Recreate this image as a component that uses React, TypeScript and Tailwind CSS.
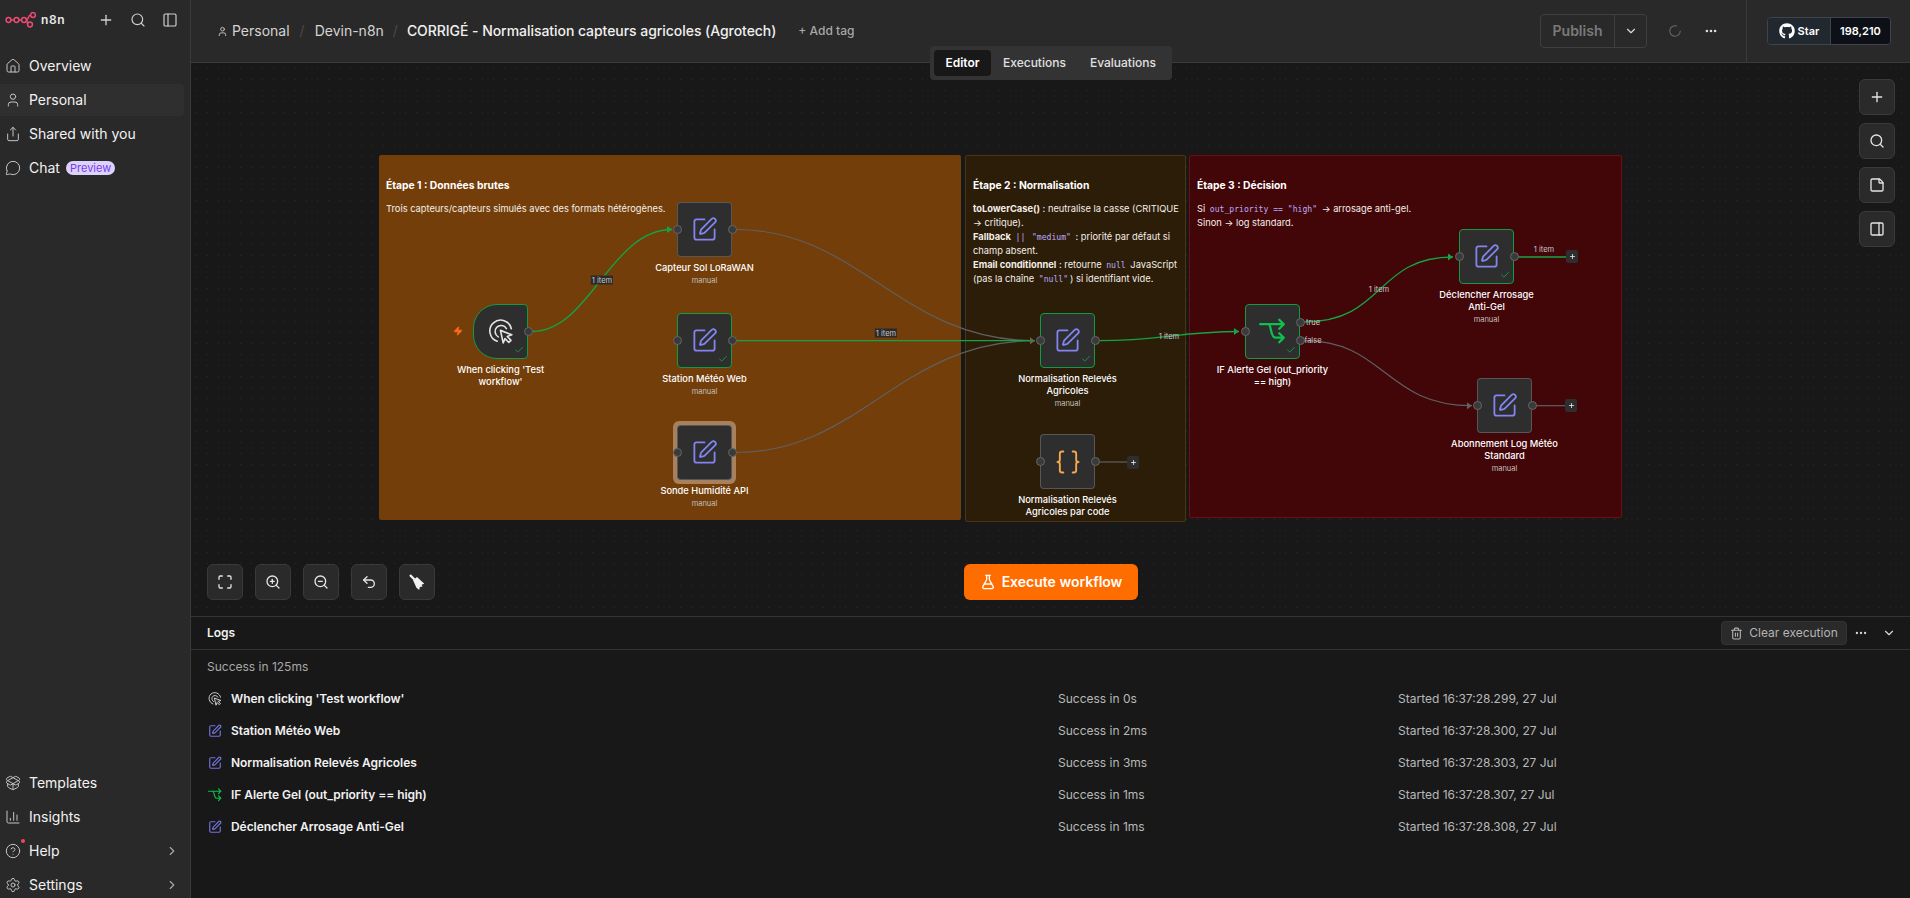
import {
  Braces,
  Check,
  ChartColumn,
  ChevronDown,
  ChevronRight,
  CircleHelp,
  Ellipsis,
  FlaskConical,
  House,
  LoaderCircle,
  Maximize,
  MessageCircle,
  PackageOpen,
  PanelRight,
  PanelLeft,
  Plus,
  Search,
  Settings,
  Share,
  SquarePen,
  StickyNote,
  Trash2,
  Undo2,
  User,
  ZoomIn,
  ZoomOut,
  Zap,
} from "lucide-react";
import { FaGithub } from "react-icons/fa";
import type { ReactNode } from "react";

const N8nLogo = () => (
  <svg width="32" height="16" viewBox="0 0 32 16" fill="none" stroke="#ea4b71" strokeWidth="1.5">
    <circle cx="3.5" cy="8" r="2.4" />
    <circle cx="11.5" cy="8" r="2.4" />
    <circle cx="19" cy="8" r="2.4" />
    <circle cx="28" cy="3" r="2.4" />
    <circle cx="25" cy="12.5" r="2.4" />
    <path d="M6 8h3M14 8h2.5M21.4 8c2.5 0 1.5-5 4.2-5M21.4 8c1.2 0 .8 4.5 1.2 4.5" />
  </svg>
);

const TriggerIcon = ({ size }: { size: number }) => (
  <svg width={size} height={size} viewBox="0 0 24 24" fill="none" stroke="#e4e4e4" strokeWidth="1.5" strokeLinecap="round" strokeLinejoin="round">
    <path d="M8.5 20.5A10 10 0 1 1 21.5 9" />
    <path d="M9.5 16.5A5.6 5.6 0 1 1 17 8.8" />
    <path d="M11.5 10.5l10.5 4-4.2 1.6 3.4 3.6-2 2-3.5-3.6-1.7 4z" fill="#2e2e2e" />
  </svg>
);

const IfIcon = ({ size }: { size: number }) => (
  <svg width={size} height={size} viewBox="0 0 24 24" fill="none" stroke="#0ec04f" strokeWidth="2" strokeLinecap="round" strokeLinejoin="round">
    <path d="M1 5.5h21M18 1.5l4 4-4 4" />
    <path d="M8.5 5.5c2.5 0 1.5 12 6 12H22M18 13.5l4 4-4 4" />
  </svg>
);

const BroomIcon = () => (
  <svg width="18" height="18" viewBox="0 0 16 16" fill="#f2f2f2">
    <path d="M1 2.5L2.5 1l4 4L5 6.5z" />
    <path d="M4.5 6.5L8 3.5l6.5 6-2.5 1 1 1.5-2.5.5-.5 2.5-2.5-2z" />
  </svg>
);

const navTop = [
  { label: "Overview", icon: <House size={16} strokeWidth={1.5} /> },
  { label: "Personal", icon: <User size={16} strokeWidth={1.5} />, active: true },
  { label: "Shared with you", icon: <Share size={16} strokeWidth={1.5} /> },
  { label: "Chat", icon: <MessageCircle size={16} strokeWidth={1.5} />, badge: "Preview" },
];

const navBottom = [
  { label: "Templates", icon: <PackageOpen size={16} strokeWidth={1.5} /> },
  { label: "Insights", icon: <ChartColumn size={16} strokeWidth={1.5} /> },
  { label: "Help", icon: <CircleHelp size={16} strokeWidth={1.5} />, more: true, dot: true },
  { label: "Settings", icon: <Settings size={16} strokeWidth={1.5} />, more: true },
];

const NavItem = ({ item }: { item: { label: string; icon: ReactNode; active?: boolean; badge?: string; more?: boolean; dot?: boolean } }) => (
  <div className={`relative flex h-[32px] w-[184px] items-center rounded-r pl-[5px] text-sm text-[#f2f2f2] ${item.active ? "bg-[#2f2f2f]" : ""}`}>
    <span className="flex w-[16px] justify-center text-[#c4c4c4]">{item.icon}</span>
    {item.dot && <span className="absolute left-[21px] top-[4px] h-[4px] w-[4px] rounded-full bg-[#f0455f]" />}
    <span className="ml-[8px]">{item.label}</span>
    {item.badge && (
      <span className="ml-[6px] rounded-full bg-[#dcd3fb] px-[4px] text-[11px] leading-[14px] text-[#7c3aed]">{item.badge}</span>
    )}
    {item.more && <ChevronRight size={14} className="absolute right-[5px] text-[#a8a8a8]" />}
  </div>
);

const Sidebar = () => (
  <aside className="flex h-full w-[191px] shrink-0 flex-col border-r border-[#3a3a3a] bg-[#292929]">
    <div className="flex h-[40px] items-center pl-[5px]">
      <N8nLogo />
      <span className="ml-[4px] text-xs font-semibold tracking-[0.6px] text-[#e8e8e8]">n8n</span>
      <Plus size={16} className="ml-[33px] text-[#d0d0d0]" />
      <Search size={16} strokeWidth={1.75} className="ml-[16px] text-[#d0d0d0]" />
      <PanelLeft size={16} strokeWidth={1.75} className="ml-[16px] text-[#d0d0d0]" />
    </div>
    <nav className="mt-[10px] flex flex-col gap-[2px]">
      {navTop.map((item) => (
        <NavItem item={item} key={item.label} />
      ))}
    </nav>
    <nav className="-mb-[3px] mt-auto flex flex-col gap-[2px]">
      {navBottom.map((item) => (
        <NavItem item={item} key={item.label} />
      ))}
    </nav>
  </aside>
);

const Header = () => (
  <header className="relative flex h-[63px] shrink-0 items-center border-b border-[#3a3a3a] bg-[#292929] pl-[26px] pr-[19px]">
    <User size={11} className="text-[#c8c8c8]" />
    <span className="ml-[4px] text-sm text-[#d4d4d4]">Personal</span>
    <span className="ml-[10px] text-sm text-[#4a4a4a]">/</span>
    <span className="ml-[10px] text-sm text-[#d4d4d4]">Devin-n8n</span>
    <span className="ml-[9px] text-sm text-[#4a4a4a]">/</span>
    <span className="ml-[9px] text-sm font-medium tracking-[-0.05px] text-[#f0f0f0]">CORRIGÉ - Normalisation capteurs agricoles (Agrotech)</span>
    <span className="ml-[22px] text-xs font-medium text-[#a8a8a8]">+ Add tag</span>
    <div className="ml-auto flex h-[34px] w-[107px] items-center rounded border border-[#3f3f3f]">
      <span className="w-[73px] text-center text-sm font-semibold text-[#7a7a7a]">Publish</span>
      <span className="flex h-full flex-1 items-center justify-center border-l border-[#3f3f3f]">
        <ChevronDown size={14} className="text-[#d8d8d8]" />
      </span>
    </div>
    <LoaderCircle size={14} strokeWidth={1.75} className="ml-[21px] text-[#6a6a6a]" />
    <Ellipsis size={14} strokeWidth={2.5} className="ml-[22px] text-[#e0e0e0]" />
    <div className="ml-[28px] h-full w-px bg-[#3a3a3a]" />
    <div className="ml-[20px] flex h-[28px] items-center overflow-hidden rounded border border-[#3d444d] text-[11px] font-semibold text-white">
      <span className="flex h-full w-[62px] items-center justify-center gap-[3px] bg-[#212830]">
        <FaGithub size={16} />
        Star
      </span>
      <span className="flex h-full w-[60px] items-center justify-center border-l border-[#3d444d] bg-[#0d1117]">198,210</span>
    </div>
  </header>
);

const Tabs = () => (
  <div className="absolute left-[739px] top-[46px] z-10 flex h-[34px] w-[242px] items-center rounded bg-[#333333] pl-[4px] text-xs font-medium text-[#e0e0e0]">
    <span className="flex h-[26px] w-[57px] items-center justify-center rounded bg-[#181818] font-semibold text-white">Editor</span>
    <span className="ml-[12px]">Executions</span>
    <span className="ml-[24px]">Evaluations</span>
  </div>
);

type NodeData = {
  pos: string;
  lines: string[];
  sub?: boolean;
  ok?: boolean;
  icon: ReactNode;
  trigger?: boolean;
  selected?: boolean;
  outputs?: string[];
};

const pen = <SquarePen size={27} strokeWidth={1.6} className="text-[#8285f0]" />;

const nodes: NodeData[] = [
  { pos: "left-[282px] top-[241px]", lines: ["When clicking 'Test", "workflow'"], ok: true, trigger: true, icon: <TriggerIcon size={26} /> },
  { pos: "left-[486px] top-[139px]", lines: ["Capteur Sol LoRaWAN"], sub: true, icon: pen },
  { pos: "left-[486px] top-[250px]", lines: ["Station Météo Web"], sub: true, ok: true, icon: pen },
  { pos: "left-[486px] top-[362px]", lines: ["Sonde Humidité API"], sub: true, selected: true, icon: pen },
  { pos: "left-[849px] top-[250px]", lines: ["Normalisation Relevés", "Agricoles"], sub: true, ok: true, icon: pen },
  { pos: "left-[849px] top-[371px]", lines: ["Normalisation Relevés", "Agricoles par code"], icon: <Braces size={28} strokeWidth={1.6} className="text-[#f5a94b]" /> },
  { pos: "left-[1054px] top-[241px]", lines: ["IF Alerte Gel (out_priority", "== high)"], ok: true, icon: <IfIcon size={27} />, outputs: ["true", "false"] },
  { pos: "left-[1268px] top-[166px]", lines: ["Déclencher Arrosage", "Anti-Gel"], sub: true, ok: true, icon: pen },
  { pos: "left-[1286px] top-[315px]", lines: ["Abonnement Log Météo", "Standard"], sub: true, icon: pen },
];

const Handle = ({ className }: { className: string }) => (
  <span className={`absolute h-[9px] w-[9px] rounded-full border border-[#666666] bg-[#3a3a3a] ${className}`} />
);

const FlowNode = ({ node }: { node: NodeData }) => (
  <div className={`absolute z-10 h-[55px] w-[55px] ${node.pos}`}>
    {node.selected && <span className="absolute -inset-[4px] rounded-[6px] bg-[#a9805c]" />}
    <div
      className={`absolute inset-0 flex items-center justify-center bg-[#2e2e2e] ${
        node.trigger ? "rounded-l-[24px] rounded-r-[4px]" : "rounded-[4px]"
      } ${node.ok ? "border-[1.5px] border-[#129c41]" : "border border-white/20"}`}
    >
      {node.icon}
    </div>
    {node.ok && <Check size={10} strokeWidth={2} className="absolute bottom-[4px] right-[4px] text-[#13a94a]" />}
    {!node.trigger && !node.outputs && <Handle className="-left-[4.5px] top-[23px]" />}
    {node.outputs ? (
      <>
        <Handle className="-left-[4.5px] top-[23px]" />
        <Handle className="-right-[4.5px] top-[14px]" />
        <Handle className="-right-[4.5px] top-[32px]" />
      </>
    ) : (
      <Handle className="-right-[4.5px] top-[23px]" />
    )}
    <div className="absolute left-1/2 top-[60px] w-[140px] -translate-x-1/2 text-center">
      {node.lines.map((line) => (
        <div className="text-[9.3px] font-medium leading-[12px] text-white" key={line}>
          {line}
        </div>
      ))}
      {node.sub && <div className="mt-[1px] text-[7.5px] leading-[12px] text-[#c4c0bc]">manual</div>}
    </div>
  </div>
);

const edgesGreen = [
  "M532 331.5C590 331.5 610 229.5 672 229.5",
  "M736 340.7H1035",
  "M1100 340.7C1160 340.7 1180 331.5 1239 331.5",
  "M1304 322C1385 322 1375 257 1453 257",
  "M1518 257H1566",
];
const edgesGray = [
  "M736 229.5C860 229.5 900 340.7 1035 340.7",
  "M736 452.5C860 452.5 900 340.7 1035 340.7",
  "M1304 340.7C1385 340.7 1385 405.7 1472 405.7",
  "M1536 405.7H1565",
  "M1099 462H1127",
];
const arrows = [
  { x: 672, y: 229.5, c: "#12a545" },
  { x: 1035, y: 340.7, c: "#5e6a50" },
  { x: 1239, y: 331.5, c: "#12a545" },
  { x: 1453, y: 257, c: "#12a545" },
  { x: 1472, y: 405.7, c: "#606060" },
];

const Edges = () => (
  <svg className="absolute inset-0 z-[5] h-full w-full" viewBox="191 63 1719 553" preserveAspectRatio="xMinYMin slice" fill="none">
    {edgesGray.map((d) => (
      <path d={d} stroke="#606060" strokeWidth="1.2" key={d} />
    ))}
    {edgesGreen.map((d) => (
      <path d={d} stroke="#12a545" strokeWidth="1.3" key={d} />
    ))}
    {arrows.map((a) => (
      <polygon points={`${a.x - 5},${a.y - 3.5} ${a.x},${a.y} ${a.x - 5},${a.y + 3.5}`} fill={a.c} key={a.x} />
    ))}
  </svg>
);

const EdgeLabel = ({ pos, text, dark }: { pos: string; text: string; dark?: boolean }) => (
  <span className={`absolute z-[6] -translate-x-1/2 -translate-y-1/2 whitespace-nowrap px-[1px] text-[7.5px] leading-[9px] text-[#c8c8c8] ${dark ? "bg-[#2a2a2a]" : ""} ${pos}`}>
    {text}
  </span>
);

const PlusBox = ({ pos }: { pos: string }) => (
  <span className={`absolute z-10 flex h-[13px] w-[12px] items-center justify-center rounded-[2px] bg-[#2e2e2e] text-[#e0e0e0] ${pos}`}>
    <Plus size={7} strokeWidth={3} />
  </span>
);

const Code = ({ children }: { children: ReactNode }) => (
  <code className="mx-[2px] [font-family:'DejaVu_Sans_Mono',monospace] text-[8.1px] text-[#bcaaf8]">{children}</code>
);

const Groups = () => (
  <>
    <div className="absolute left-[188px] top-[92px] h-[365px] w-[582px] rounded-[2px] bg-[#733e0a] pl-[7px] pt-[23px] text-[9.3px] leading-[14px] text-[#f4efe8]">
      <div className="mb-[10px] text-[10.3px] font-bold text-white">Étape 1 : Données brutes</div>
      <div>Trois capteurs/capteurs simulés avec des formats hétérogènes.</div>
    </div>
    <div className="absolute left-[774px] top-[92px] h-[367px] w-[221px] rounded-[2px] border border-[#4a3512] bg-[#2c1d08] pl-[7px] pt-[22px] text-[9.3px] leading-[14px] text-[#f4efe8]">
      <div className="mb-[10px] text-[10.3px] font-bold text-white">Étape 2 : Normalisation</div>
      <div className="whitespace-nowrap">
        <b>toLowerCase()</b> : neutralise la casse (CRITIQUE
        <br />→ critique).
        <br />
        <b>Fallback</b> <Code>||</Code> <Code>"medium"</Code> : priorité par défaut si
        <br />champ absent.
        <br />
        <b>Email conditionnel</b> : retourne <Code>null</Code> JavaScript
        <br />(pas la chaîne <Code>"null"</Code>) si identifiant vide.
      </div>
    </div>
    <div className="absolute left-[998px] top-[92px] h-[363px] w-[433px] rounded-[2px] border border-[#6e0e10] bg-[#420508] pl-[7px] pt-[22px] text-[9.3px] leading-[14px] text-[#f4efe8]">
      <div className="mb-[10px] text-[10.3px] font-bold text-white">Étape 3 : Décision</div>
      <div className="whitespace-nowrap">
        Si <Code>out_priority == "high"</Code> → arrosage anti-gel.
        <br />Sinon → log standard.
      </div>
    </div>
  </>
);

const CanvasButton = ({ children }: { children: ReactNode }) => (
  <button className="flex h-[36px] w-[36px] items-center justify-center rounded-[6px] border border-[#3a3a3a] bg-[#2a2a2a] text-[#e4e4e4]">
    {children}
  </button>
);

const Canvas = () => (
  <div className="relative flex-1 overflow-hidden bg-[#181818] bg-[radial-gradient(#2a2a2a_0.8px,transparent_0.8px)] bg-[size:11px_11px]">
    <Groups />
    <Edges />
    {nodes.map((node) => (
      <FlowNode node={node} key={node.pos} />
    ))}
    <Zap size={10} fill="#ff6d1a" className="absolute left-[262px] top-[263px] z-10 text-[#ff6d1a]" />
    <EdgeLabel pos="left-[411px] top-[217px]" text="1 item" dark />
    <EdgeLabel pos="left-[695px] top-[270px]" text="1 item" dark />
    <EdgeLabel pos="left-[978px] top-[273px]" text="1 item" />
    <EdgeLabel pos="left-[1188px] top-[226px]" text="1 item" />
    <EdgeLabel pos="left-[1353px] top-[186px]" text="1 item" />
    <EdgeLabel pos="left-[1122px] top-[259px]" text="true" />
    <EdgeLabel pos="left-[1122px] top-[277px]" text="false" />
    <PlusBox pos="left-[1375px] top-[187px]" />
    <PlusBox pos="left-[1374px] top-[336px]" />
    <PlusBox pos="left-[936px] top-[393px]" />

    <div className="absolute right-[15px] top-[16px] z-20 flex flex-col gap-[8px]">
      <CanvasButton>
        <Plus size={16} />
      </CanvasButton>
      <CanvasButton>
        <Search size={16} />
      </CanvasButton>
      <CanvasButton>
        <StickyNote size={16} />
      </CanvasButton>
      <CanvasButton>
        <PanelRight size={16} />
      </CanvasButton>
    </div>

    <div className="absolute bottom-[16px] left-[16px] z-20 flex gap-[12px]">
      <CanvasButton>
        <Maximize size={16} />
      </CanvasButton>
      <CanvasButton>
        <ZoomIn size={16} />
      </CanvasButton>
      <CanvasButton>
        <ZoomOut size={16} />
      </CanvasButton>
      <CanvasButton>
        <Undo2 size={16} />
      </CanvasButton>
      <CanvasButton>
        <BroomIcon />
      </CanvasButton>
    </div>

    <button className="absolute bottom-[16px] left-[773px] z-20 flex h-[36px] w-[174px] items-center justify-center gap-[6px] rounded-[6px] bg-[#ff6d00] text-sm font-semibold text-white">
      <FlaskConical size={16} />
      Execute workflow
    </button>
  </div>
);

const logRows = [
  { name: "When clicking 'Test workflow'", took: "Success in 0s", at: "Started 16:37:28.299, 27 Jul", icon: <TriggerIcon size={14} /> },
  { name: "Station Météo Web", took: "Success in 2ms", at: "Started 16:37:28.300, 27 Jul", icon: <SquarePen size={14} className="text-[#6f72d8]" /> },
  { name: "Normalisation Relevés Agricoles", took: "Success in 3ms", at: "Started 16:37:28.303, 27 Jul", icon: <SquarePen size={14} className="text-[#6f72d8]" /> },
  { name: "IF Alerte Gel (out_priority == high)", took: "Success in 1ms", at: "Started 16:37:28.307, 27 Jul", icon: <IfIcon size={14} /> },
  { name: "Déclencher Arrosage Anti-Gel", took: "Success in 1ms", at: "Started 16:37:28.308, 27 Jul", icon: <SquarePen size={14} className="text-[#6f72d8]" /> },
];

const Logs = () => (
  <section className="h-[282px] shrink-0 border-t border-[#333333] bg-[#181818] text-xs">
    <div className="flex h-[33px] items-center border-b border-[#333333] pl-[16px] pr-[14px]">
      <span className="font-semibold text-[#f0f0f0]">Logs</span>
      <span className="ml-auto flex h-[24px] w-[126px] items-center justify-center gap-[6px] rounded border border-[#333333] bg-[#2a2a2a] text-[#b4b4b4]">
        <Trash2 size={13} />
        Clear execution
      </span>
      <Ellipsis size={14} className="ml-[7px] text-[#d8d8d8]" />
      <ChevronDown size={14} className="ml-[14px] text-[#d8d8d8]" />
    </div>
    <div className="pl-[16px] pt-[9px] leading-[16px] text-[#a8a8a8]">Success in 125ms</div>
    <div className="mt-[8px] flex flex-col">
      {logRows.map((row) => (
        <div className="flex h-[32px] items-center pl-[17px]" key={row.name}>
          <span className="flex w-[14px] justify-center">{row.icon}</span>
          <span className="ml-[9px] w-[827px] font-semibold tracking-[-0.05px] text-[#f0f0f0]">{row.name}</span>
          <span className="w-[340px] text-[#b8b8b8]">{row.took}</span>
          <span className="text-[#b8b8b8]">{row.at}</span>
        </div>
      ))}
    </div>
  </section>
);

export default function App() {
  return (
    <div className="flex h-screen w-full overflow-hidden bg-[#181818] [font-family:Inter,sans-serif]">
      <Sidebar />
      <main className="relative flex min-w-0 flex-1 flex-col">
        <Header />
        <Tabs />
        <Canvas />
        <Logs />
      </main>
    </div>
  );
}
